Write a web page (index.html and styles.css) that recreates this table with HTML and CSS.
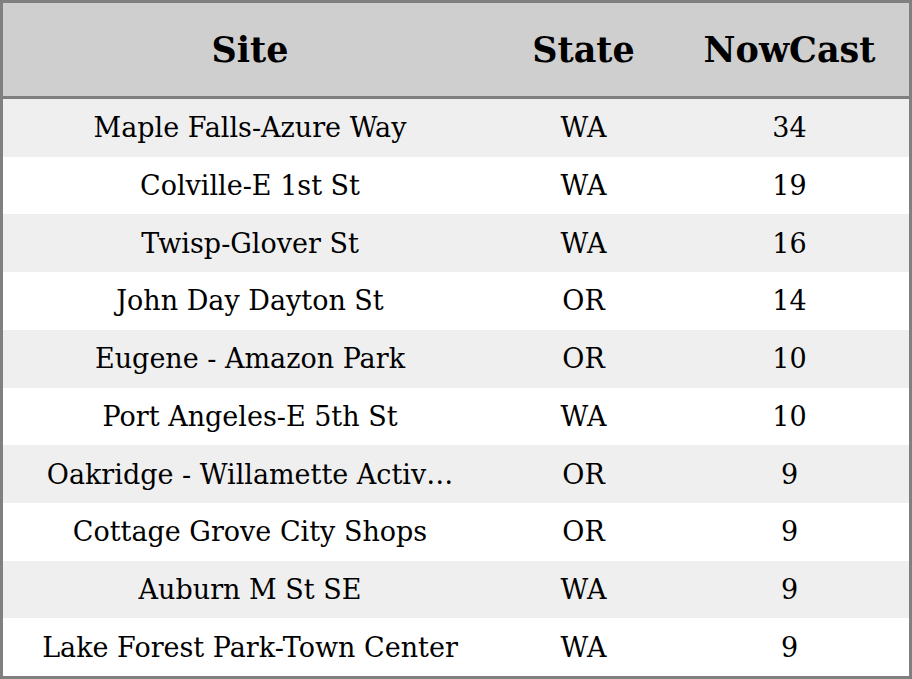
FILE: index.html
```html
<!DOCTYPE html>
<html>
<head>
<meta charset="utf-8">
<link rel="stylesheet" href="styles.css">
</head>
<body>
<div class="table">
  <div class="row head">
    <div class="cell">Site</div>
    <div class="cell">State</div>
    <div class="cell">NowCast</div>
  </div>
  <div class="body">
    <div class="row"><div class="cell">Maple Falls-Azure Way</div><div class="cell">WA</div><div class="cell">34</div></div>
    <div class="row"><div class="cell">Colville-E 1st St</div><div class="cell">WA</div><div class="cell">19</div></div>
    <div class="row"><div class="cell">Twisp-Glover St</div><div class="cell">WA</div><div class="cell">16</div></div>
    <div class="row"><div class="cell">John Day Dayton St</div><div class="cell">OR</div><div class="cell">14</div></div>
    <div class="row"><div class="cell">Eugene - Amazon Park</div><div class="cell">OR</div><div class="cell">10</div></div>
    <div class="row"><div class="cell">Port Angeles-E 5th St</div><div class="cell">WA</div><div class="cell">10</div></div>
    <div class="row"><div class="cell">Oakridge - Willamette Activ…</div><div class="cell">OR</div><div class="cell">9</div></div>
    <div class="row"><div class="cell">Cottage Grove City Shops</div><div class="cell">OR</div><div class="cell">9</div></div>
    <div class="row"><div class="cell">Auburn M St SE</div><div class="cell">WA</div><div class="cell">9</div></div>
    <div class="row"><div class="cell">Lake Forest Park-Town Center</div><div class="cell">WA</div><div class="cell">9</div></div>
  </div>
</div>
</body>
</html>
```
FILE: styles.css
```css
* { box-sizing: border-box; }
html, body { margin: 0; padding: 0; }
body {
  width: 912px;
  height: 679px;
  font-family: "DejaVu Serif", serif;
  color: #000;
  background: #fff;
}
.table {
  width: 912px;
  height: 679px;
  border: 3px solid #808080;
  display: flex;
  flex-direction: column;
}
.row {
  display: grid;
  grid-template-columns: 494px 173px 239px;
  align-items: center;
  text-align: center;
}
.head {
  height: 96px;
  background: #cfcfcf;
  border-bottom: 3px solid #808080;
  font-weight: bold;
  font-size: 35px;
}
.body {
  flex: 1;
  display: grid;
  grid-template-rows: repeat(10, 1fr);
  font-size: 27px;
}
.body .row:nth-child(odd) { background: #efefef; }
.body .row:nth-child(even) { background: #fff; }
.cell { white-space: nowrap; }
```
